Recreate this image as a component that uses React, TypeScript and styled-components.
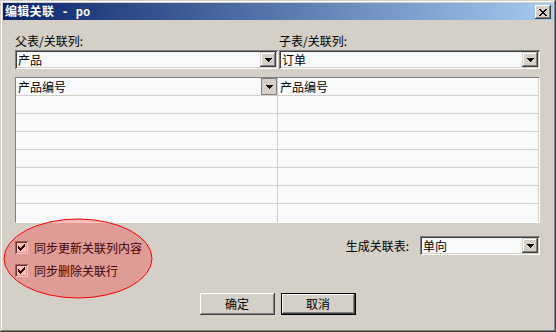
import styled, { createGlobalStyle } from "styled-components";

const colors = {
    face: "#d4d0c8",
    shadow: "#808080",
    darkShadow: "#404040",
    highlight: "#ffffff",
    field: "#f8f9fb",
    text: "#000000",
    titleFrom: "#0a246a",
    titleTo: "#a6caf0",
};

const raised = `inset -1px -1px ${colors.darkShadow}, inset 1px 1px ${colors.highlight}, inset -2px -2px ${colors.shadow}, inset 2px 2px ${colors.face}`;
const sunken = `inset 1px 1px ${colors.shadow}, inset -1px -1px ${colors.highlight}, inset 2px 2px ${colors.darkShadow}, inset -2px -2px ${colors.face}`;

const GlobalStyle = createGlobalStyle`
    html, body {
        margin: 0;
        padding: 0;
        background: #ffffff;
    }
    body {
        font-family: "Noto Sans CJK SC", "DejaVu Sans", sans-serif;
        font-size: 12px;
        color: ${colors.text};
    }
`;

const Window = styled.div`
    position: relative;
    width: 556px;
    height: 332px;
    box-sizing: border-box;
    padding: 3px;
    background: ${colors.face};
    box-shadow: inset -1px -1px ${colors.darkShadow}, inset 1px 1px ${colors.face},
        inset -2px -2px ${colors.shadow}, inset 2px 2px ${colors.highlight};
    display: flex;
    flex-direction: column;
`;

const TitleBar = styled.div`
    height: 17px;
    display: flex;
    align-items: center;
    justify-content: space-between;
    padding: 0 2px 0 2px;
    background: linear-gradient(to right, ${colors.titleFrom}, ${colors.titleTo});
`;

const Title = styled.span`
    color: #ffffff;
    font-weight: bold;
    font-size: 12px;
    line-height: 17px;
    letter-spacing: 0.3px;
    white-space: pre;
`;

const TitleLatin = styled.span`
    font-family: "Liberation Mono", "DejaVu Sans Mono", monospace;
    letter-spacing: 0;
`;

const CloseButton = styled.div`
    width: 16px;
    height: 14px;
    margin-top: 1px;
    display: flex;
    align-items: center;
    justify-content: center;
    background: ${colors.face};
    box-shadow: ${raised};
`;

const Body = styled.div`
    flex: 1;
    display: flex;
    flex-direction: column;
    padding: 14px 13px 0 12px;
`;

const FieldRow = styled.div`
    display: grid;
    grid-template-columns: 263px 1fr;
`;

const Field = styled.div<{ $inset?: number }>`
    display: flex;
    flex-direction: column;
    padding-left: ${(p) => p.$inset ?? 0}px;
`;

const Label = styled.span`
    line-height: 14px;
    height: 14px;
    margin-bottom: 2px;
    white-space: nowrap;
`;

const Combo = styled.div<{ $width?: number }>`
    height: 19px;
    box-sizing: border-box;
    width: ${(p) => (p.$width ? `${p.$width}px` : "auto")};
    padding: 2px;
    background: ${colors.field};
    box-shadow: ${sunken};
    display: flex;
    align-items: center;
`;

const ComboText = styled.span`
    flex: 1;
    padding-left: 1px;
    line-height: 15px;
    white-space: nowrap;
`;

const ArrowButton = styled.div`
    width: 16px;
    height: 15px;
    flex: none;
    display: flex;
    align-items: center;
    justify-content: center;
    background: ${colors.face};
    box-shadow: inset -1px -1px ${colors.darkShadow}, inset 1px 1px ${colors.face},
        inset -2px -2px ${colors.shadow}, inset 2px 2px ${colors.highlight};
`;

const Grid = styled.div`
    margin-top: 8px;
    display: flex;
    border: 1px solid;
    border-color: ${colors.shadow} ${colors.highlight} ${colors.highlight} ${colors.shadow};
    background: ${colors.field};
`;

const Column = styled.div<{ $width?: number }>`
    display: flex;
    flex-direction: column;
    width: ${(p) => (p.$width ? `${p.$width}px` : "auto")};
    flex: ${(p) => (p.$width ? "none" : "1")};
    border-right: 1px solid ${colors.face};
`;

const Cell = styled.div`
    height: 18px;
    box-sizing: border-box;
    border-bottom: 1px solid ${colors.face};
    display: flex;
    align-items: center;
    justify-content: space-between;
    padding-left: 2px;
    line-height: 17px;

    &:last-child {
        border-bottom: none;
    }
`;

const HeaderDrop = styled.div`
    width: 16px;
    height: 17px;
    box-sizing: border-box;
    border: 1px solid ${colors.shadow};
    background: ${colors.face};
    display: flex;
    align-items: center;
    justify-content: center;
    align-self: flex-start;
`;

const OptionsRow = styled.div`
    margin-top: 13px;
    display: flex;
    justify-content: space-between;
    align-items: flex-start;
`;

const Checks = styled.div`
    margin-top: 5px;
    display: flex;
    flex-direction: column;
    gap: 10px;
`;

const CheckRow = styled.label`
    display: flex;
    align-items: center;
    gap: 6px;
    height: 13px;
    line-height: 13px;
    white-space: nowrap;
`;

const CheckBox = styled.span`
    width: 13px;
    height: 13px;
    box-sizing: border-box;
    background: #ffffff;
    box-shadow: ${sunken};
    display: flex;
    align-items: center;
    justify-content: center;
`;

const TableGroup = styled.div`
    display: flex;
    align-items: center;
    gap: 11px;
`;

const Buttons = styled.div`
    margin-top: 16px;
    display: flex;
    justify-content: center;
    gap: 6px;
`;

const Button = styled.button<{ $default?: boolean }>`
    width: 75px;
    height: 22px;
    padding: 0;
    border: ${(p) => (p.$default ? `1px solid #000000` : "none")};
    box-sizing: border-box;
    background: ${colors.face};
    box-shadow: ${raised};
    font-family: inherit;
    font-size: 12px;
    color: ${colors.text};
    line-height: 20px;
`;

const Annotation = styled.svg`
    position: absolute;
    left: 3px;
    top: 218px;
    pointer-events: none;
`;

const Arrow = () => (
    <svg width="7" height="4" viewBox="0 0 7 4" shapeRendering="crispEdges">
        <path d="M0 0h7v1H0z M1 1h5v1H1z M2 2h3v1H2z M3 3h1v1H3z" fill="#000" />
    </svg>
);

const Check = () => (
    <svg width="9" height="9" viewBox="0 0 9 9" shapeRendering="crispEdges">
        <path d="M1 3h1v1h1v1h1V4h1V3h1V2h1V1h1v3H7v1H6v1H5v1H4v1H3V7H2V6H1z" fill="#000" />
    </svg>
);

const CloseX = () => (
    <svg width="8" height="7" viewBox="0 0 8 7" shapeRendering="crispEdges">
        <path d="M0 0h2v1h1v1h2V1h1V0h2v1H7v1H6v1H5v1h1v1h1v1h1v1H6V6H5V5H3v1H2v1H0V6h1V5h1V4h1V3H2V2H1V1H0z" fill="#000" />
    </svg>
);

const dataRows = 7;

export default function App() {
    const rows = Array.from({ length: dataRows }, (_, i) => i);
    return (
        <>
            <GlobalStyle />
            <Window>
                <TitleBar>
                    <Title>
                        编辑关联<TitleLatin> - po</TitleLatin>
                    </Title>
                    <CloseButton>
                        <CloseX />
                    </CloseButton>
                </TitleBar>
                <Body>
                    <FieldRow>
                        <Field>
                            <Label>父表/关联列:</Label>
                            <Combo $width={263}>
                                <ComboText>产品</ComboText>
                                <ArrowButton>
                                    <Arrow />
                                </ArrowButton>
                            </Combo>
                        </Field>
                        <Field $inset={1}>
                            <Label>子表/关联列:</Label>
                            <Combo>
                                <ComboText>订单</ComboText>
                                <ArrowButton>
                                    <Arrow />
                                </ArrowButton>
                            </Combo>
                        </Field>
                    </FieldRow>

                    <Grid>
                        <Column $width={261}>
                            <Cell>
                                <span>产品编号</span>
                                <HeaderDrop>
                                    <Arrow />
                                </HeaderDrop>
                            </Cell>
                            {rows.map((r) => (
                                <Cell key={r} />
                            ))}
                        </Column>
                        <Column>
                            <Cell>
                                <span>产品编号</span>
                            </Cell>
                            {rows.map((r) => (
                                <Cell key={r} />
                            ))}
                        </Column>
                    </Grid>

                    <OptionsRow>
                        <Checks>
                            <CheckRow>
                                <CheckBox>
                                    <Check />
                                </CheckBox>
                                同步更新关联列内容
                            </CheckRow>
                            <CheckRow>
                                <CheckBox>
                                    <Check />
                                </CheckBox>
                                同步删除关联行
                            </CheckRow>
                        </Checks>
                        <TableGroup>
                            <span>生成关联表:</span>
                            <Combo $width={120}>
                                <ComboText>单向</ComboText>
                                <ArrowButton>
                                    <Arrow />
                                </ArrowButton>
                            </Combo>
                        </TableGroup>
                    </OptionsRow>

                    <Buttons>
                        <Button>确定</Button>
                        <Button $default>取消</Button>
                    </Buttons>
                </Body>

                <Annotation width="151" height="82" viewBox="0 0 151 82">
                    <ellipse
                        cx="75"
                        cy="40.5"
                        rx="74"
                        ry="39.5"
                        fill="rgba(255,0,0,0.25)"
                        stroke="#ff0000"
                        strokeWidth="1"
                    />
                </Annotation>
            </Window>
        </>
    );
}
